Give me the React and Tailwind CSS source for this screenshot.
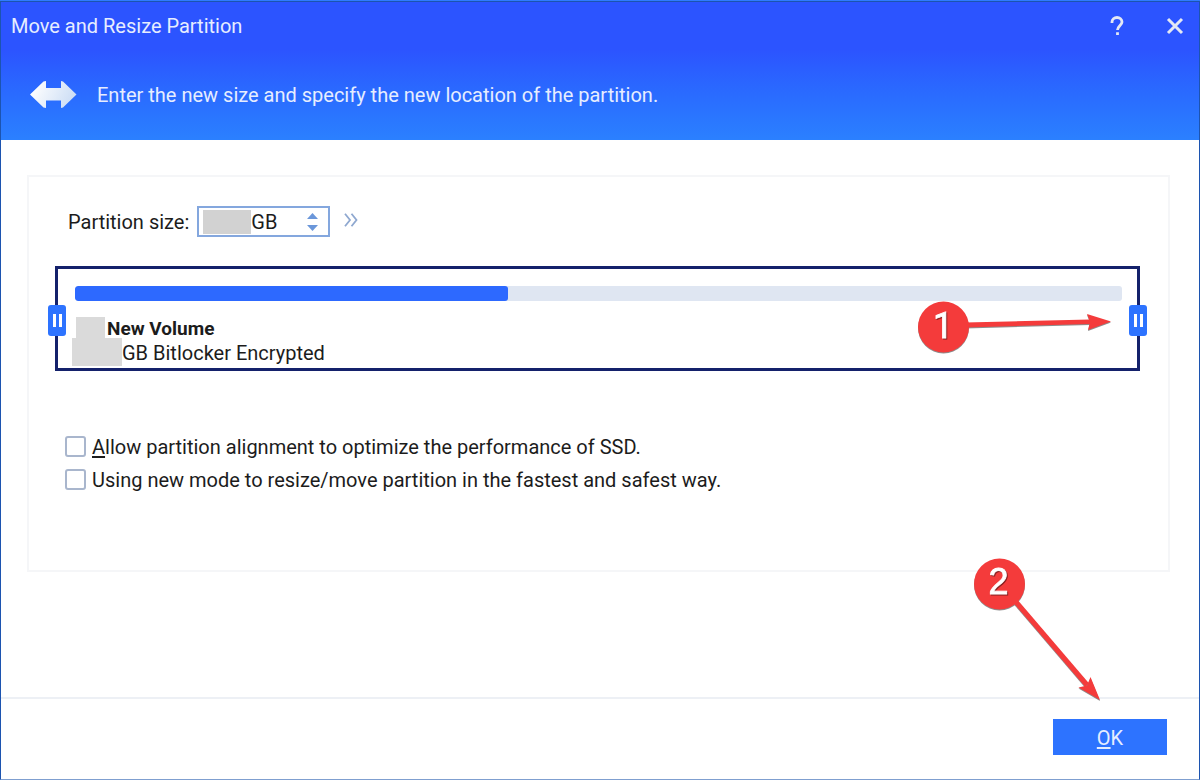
import { useState } from "react";

const options = [
  {
    id: "ssd-alignment",
    label: (
      <>
        <span className="underline underline-offset-2">A</span>llow partition alignment to optimize the performance of SSD.
      </>
    ),
  },
  {
    id: "new-mode",
    label: "Using new mode to resize/move partition in the fastest and safest way.",
  },
];

function MoveIcon() {
  return (
    <svg width="48" height="30" viewBox="0 0 48 30" aria-hidden="true">
      <defs>
        <linearGradient id="arrowFill" x1="0" y1="0" x2="1" y2="0.3">
          <stop offset="0.1" stopColor="#ffffff" />
          <stop offset="1" stopColor="#cfdff5" />
        </linearGradient>
      </defs>
      <path
        d="M1 14.500 14.500 1.500 17 1V8H32V1L34 1.500 47.500 14.500 34 27.500 32 28V20.500H17V28L14.500 27.500Z"
        fill="url(#arrowFill)"
      />
    </svg>
  );
}

// Grip on either side of the volume box
function Handle({ side, label }) {
  return (
    <button
      type="button"
      aria-label={label}
      className={`absolute top-9 flex h-[31px] w-[18px] items-center justify-center gap-[3px] rounded-[3px] bg-[#2d73ff] ${
        side === "left" ? "-left-[10px]" : "-right-[10px]"
      }`}
    >
      <span className="h-[13px] w-[3px] bg-white" />
      <span className="h-[13px] w-[3px] bg-white" />
    </button>
  );
}

function StepOne() {
  return (
    <svg
      className="pointer-events-none absolute top-[26px] right-[22px] drop-shadow-[0_1px_0_rgba(0,0,0,0.45)]"
      width="200"
      height="60"
      viewBox="0 0 200 60"
    >
      <path d="M50 27.500 175 24.500V29L50 32.500Z" fill="#f43b3b" />
      <path d="M196 26.500 172 19 175 26.700 173 35Z" fill="#f43b3b" />
      <circle cx="28.500" cy="32" r="25.500" fill="#f43b3b" />
      <text
        x="28"
        y="43"
        textAnchor="middle"
        fill="#fff"
        stroke="#fff"
        strokeWidth="0.800"
        fontSize="36"
        fontFamily="Roboto, sans-serif"
        className="drop-shadow-[1px_1px_0_rgba(0,0,0,0.45)]"
      >
        1
      </text>
    </svg>
  );
}

function StepTwo() {
  return (
    <svg
      className="pointer-events-none absolute right-[57px] bottom-full mb-[14px] drop-shadow-[0_1px_0_rgba(0,0,0,0.45)]"
      width="140"
      height="150"
      viewBox="0 0 140 150"
    >
      <path d="M46 47 117 130" stroke="#f43b3b" strokeWidth="5" />
      <path d="M130 145 120.500 122 117 130.500 108.500 132.500Z" fill="#f43b3b" />
      <circle cx="29.500" cy="29" r="25.500" fill="#f43b3b" />
      <text
        x="28.500"
        y="39"
        textAnchor="middle"
        fill="#fff"
        stroke="#fff"
        strokeWidth="0.800"
        fontSize="36"
        fontFamily="'Liberation Sans', sans-serif"
        className="drop-shadow-[1px_1px_0_rgba(0,0,0,0.45)]"
      >
        2
      </text>
    </svg>
  );
}

function SizeField() {
  const [size, setSize] = useState("GB");

  return (
    <div className="flex items-center">
      <label htmlFor="partition-size" className="mr-2">
        Partition size:
      </label>
      <div className="flex h-[31px] w-[133px] items-center border-2 border-[#84a7de] bg-white pl-1">
        <span className="h-6 w-12 shrink-0 bg-[#d2d2d2]" />
        <input
          id="partition-size"
          value={size}
          onChange={(e) => setSize(e.target.value)}
          className="w-full min-w-0 bg-transparent outline-none"
        />
        <div className="mr-2.5 flex shrink-0 flex-col gap-1.5">
          <button type="button" aria-label="Increase">
            <svg className="block" width="11" height="6" viewBox="0 0 11 6">
              <path d="M5.500 0 11 6H0Z" fill="#6b97da" />
            </svg>
          </button>
          <button type="button" aria-label="Decrease">
            <svg className="block" width="11" height="6" viewBox="0 0 11 6">
              <path d="M0 0H11L5.500 6Z" fill="#6b97da" />
            </svg>
          </button>
        </div>
      </div>
      <button type="button" aria-label="More settings" className="mb-1 ml-3.5">
        <svg width="14" height="14" viewBox="0 0 14 14" fill="none" stroke="#8fa8d0" strokeWidth="1.800">
          <path d="M1 .7 6 7 1 13.300M7.500 .7 12.500 7 7.500 13.300" />
        </svg>
      </button>
    </div>
  );
}

function VolumeBox() {
  return (
    <div className="relative mr-7 ml-[26px] border-3 border-[#14216b] pt-[17px] pr-[15px] pb-0.5 pl-[14px]">
      <div className="ml-[3px] h-[15px] overflow-hidden rounded-[3px] bg-[#dfe6f2]">
        <div className="h-full rounded-[3px] bg-[#2d69ff]" style={{ width: "41.4%" }} />
      </div>
      <div className="mt-4 flex h-[21px] items-center gap-0.5 text-[19px] font-bold">
        <span className="ml-1 h-full w-[29px] bg-[#dadada]" />
        <span className="pt-0.5">New Volume</span>
      </div>
      <div className="flex h-7 items-center">
        <span className="h-full w-[50px] bg-[#dadada]" />
        <span className="pt-0.5">GB Bitlocker Encrypted</span>
      </div>
      <Handle side="left" label="Move start of partition" />
      <Handle side="right" label="Move end of partition" />
      <StepOne />
    </div>
  );
}

function App() {
  return (
    <div className="flex min-h-screen flex-col border-t border-[#2f7bff] bg-white font-['Roboto',sans-serif] text-[20px] leading-6 text-[#1c1c1c]">
      <div className="flex flex-1 flex-col border border-[#1c54b0] border-b-[#7f9fd0]">
        <header className="bg-linear-to-b from-[#2c54ff] from-35% to-[#2b80ff] text-[#e6edff]">
          <div className="flex h-12 items-center justify-between pr-[15px] pl-[10px]">
            <h1>Move and Resize Partition</h1>
            <div className="flex items-center gap-10">
              <button type="button" aria-label="Help">
                <svg width="18" height="20" viewBox="0 0 18 20" fill="none" stroke="#e4e8f4" strokeWidth="2.800">
                  <path d="M4 7V6a5 4.500 0 0 1 10 0c0 3-4.500 4-4.500 8M9.500 16.300v2.800" />
                </svg>
              </button>
              <button type="button" aria-label="Close">
                <svg width="18" height="18" viewBox="0 0 18 18" stroke="#e4e8f4" strokeWidth="3">
                  <path d="M2 2 16 16M16 2 2 16" />
                </svg>
              </button>
            </div>
          </div>
          <div className="flex h-[90px] items-center gap-5 pl-7">
            <MoveIcon />
            <p>Enter the new size and specify the new location of the partition.</p>
          </div>
        </header>

        <main className="flex-1 pt-[35px] pr-[29px] pb-8 pl-[26px]">
          <section className="border-2 border-[#f5f6f8] pt-[29px] pb-20">
            <div className="pl-[39px]">
              <SizeField />
            </div>
            <div className="mt-[29px]">
              <VolumeBox />
            </div>
            <div className="mt-[65px] flex flex-col gap-3 pl-9">
              {options.map((option) => (
                <div key={option.id} className="flex h-[21px] items-center gap-1.5">
                  <input
                    id={option.id}
                    type="checkbox"
                    className="size-[21px] appearance-none rounded-[3px] border-2 border-[#a9b6cd] bg-white checked:bg-[#2d73ff]"
                  />
                  <label htmlFor={option.id}>{option.label}</label>
                </div>
              ))}
            </div>
          </section>
        </main>

        <footer className="flex justify-end border-t-2 border-[#edf0f5] pt-5 pr-8 pb-6">
          <div className="relative">
            <StepTwo />
            <button type="button" className="h-9 w-[114px] bg-[#2d73ff] pt-0.5 text-[#e6edff]">
              <span className="underline underline-offset-2">O</span>K
            </button>
          </div>
        </footer>
      </div>
    </div>
  );
}

export default App;
